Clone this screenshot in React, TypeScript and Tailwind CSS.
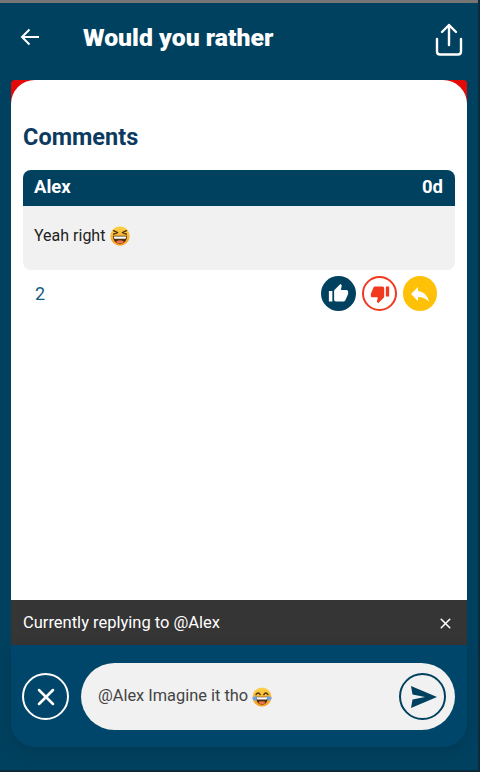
import React from "react";
import { X } from "lucide-react";
import { MdThumbUp, MdThumbDown, MdReply } from "react-icons/md";

function Grin({ size = 20 }: { size?: number }) {
  return (
    <svg width={size} height={size} viewBox="0 0 20 20" className="inline-block shrink-0">
      <defs>
        <linearGradient id="g1" x1="0" y1="0" x2="0" y2="1">
          <stop offset="0" stopColor="#fbd24a" />
          <stop offset="1" stopColor="#f79a1c" />
        </linearGradient>
      </defs>
      <circle cx="10" cy="10" r="9.7" fill="url(#g1)" />
      <path d="M3.6 4.6 L7.6 6.6 L3.6 8.2 M16.4 4.6 L12.4 6.6 L16.4 8.2" fill="none" stroke="#4a2f12" strokeWidth="1.3" strokeLinecap="round" strokeLinejoin="round" />
      <path d="M3 9.8 H17 C17 15 13.8 17.8 10 17.8 C6.2 17.8 3 15 3 9.8 Z" fill="#4a2f12" />
      <path d="M3.8 10.4 H16.2 C16.1 11.4 15.9 12.2 15.6 12.8 H4.4 C4.1 12.2 3.9 11.4 3.8 10.4 Z" fill="#fff" />
      <ellipse cx="10" cy="15.8" rx="3.6" ry="1.5" fill="#f2714e" />
    </svg>
  );
}

function Joy({ size = 20 }: { size?: number }) {
  return (
    <svg width={size} height={size} viewBox="0 0 20 20" className="inline-block shrink-0">
      <defs>
        <linearGradient id="g2" x1="0" y1="0" x2="0" y2="1">
          <stop offset="0" stopColor="#fbd24a" />
          <stop offset="1" stopColor="#f79a1c" />
        </linearGradient>
      </defs>
      <circle cx="10" cy="10" r="9.5" fill="url(#g2)" />
      <path d="M4 7.6 Q6.2 4.4 8.2 7.6 M11.8 7.6 Q13.8 4.4 16 7.6" fill="none" stroke="#4a2f12" strokeWidth="1.3" strokeLinecap="round" />
      <path d="M4 9.8 H16 C16 15 13.3 17.6 10 17.6 C6.7 17.6 4 15 4 9.8 Z" fill="#4a2f12" />
      <path d="M4.8 10.3 H15.2 C15.1 11.2 14.9 11.9 14.6 12.5 H5.4 C5.1 11.9 4.9 11.2 4.8 10.3 Z" fill="#fff" />
      <ellipse cx="10" cy="15.7" rx="3.2" ry="1.4" fill="#f2714e" />
      <path d="M0 11 Q2 8.6 5 9.4 L4.6 13.6 Q1.4 14 0 11 Z M20 11 Q18 8.6 15 9.4 L15.4 13.6 Q18.6 14 20 11 Z" fill="#6f9fe8" />
    </svg>
  );
}

export default function App() {
  return (
    <div className="w-[480px] h-[772px] overflow-hidden flex flex-col bg-[#00415f] font-['Roboto',sans-serif] border-r-2 border-b-2 border-r-[#0b2a3c] border-b-[#0b2a3c]">
      <div className="h-[3px] bg-[#757575] shrink-0" />
      <header className="h-[77px] shrink-0 flex items-center pl-[20px] pr-[15px] pb-[6px]">
        <svg width="20" height="18" viewBox="0 0 20 18" fill="none" stroke="#fff" strokeWidth="2" className="mb-[3px]">
          <path d="M19 9 H2 M9.5 1.5 L2 9 L9.5 16.5" />
        </svg>
        <h1 className="ml-[43px] text-[24.8px] leading-none font-black text-white">Would you rather</h1>
        <svg width="28" height="33" viewBox="0 0 28 33" fill="none" stroke="#fff" strokeWidth="2.4" strokeLinecap="round" strokeLinejoin="round" className="ml-auto mt-[1px]">
          <path d="M14 22 V2 M7 9 L14 2 L21 9" />
          <path d="M2 16 V28.5 Q2 31.5 5 31.5 H23 Q26 31.5 26 28.5 V16" />
        </svg>
      </header>
      <div className="relative w-[456px] ml-[11px] h-[667px] shrink-0 flex flex-col">
        <div className="absolute top-0 left-0 right-0 h-[24px] bg-[#e30a0a] rounded-t-[4px]" />
        <main className="relative flex-1 bg-white rounded-t-[24px] px-[12px] pt-[43px] flex flex-col">
          <h2 className="text-[23.5px] leading-[28px] font-bold text-[#0c3a60]">Comments</h2>
          <div className="mt-[19px] rounded-[8px] overflow-hidden">
            <div className="h-[36px] bg-[#00415f] flex items-center justify-between pl-[11px] pr-[12px] text-white font-bold text-[18.5px]">
              <span>Alex</span>
              <span>0d</span>
            </div>
            <div className="h-[64px] bg-[#f1f1f1] pl-[11px] pt-[20px] flex items-start gap-[5px] text-[16px] leading-[20px] text-[#222]">
              <span>Yeah right</span>
              <Grin />
            </div>
          </div>
          <div className="mt-[6px] flex items-center h-[35px] pl-[12px] pr-[18px]">
            <span className="text-[#0f5c80] text-[18px]">2</span>
            <div className="ml-auto flex gap-[6px]">
              <div className="w-[35px] h-[35px] rounded-full bg-[#00415f] flex items-center justify-center">
                <MdThumbUp size={21} color="#fff" />
              </div>
              <div className="w-[35px] h-[35px] rounded-full border-2 border-[#f0391e] bg-white flex items-center justify-center">
                <MdThumbDown size={20} color="#f0391e" />
              </div>
              <div className="w-[34px] h-[35px] rounded-full bg-[#ffc107] flex items-center justify-center">
                <MdReply size={24} color="#fff" />
              </div>
            </div>
          </div>
        </main>
        <div className="h-[45px] shrink-0 bg-[#353535] flex items-center justify-between pl-[12px] pr-[13px] pt-[1px] text-white text-[16.5px]">
          <span>Currently replying to @Alex</span>
          <X size={17} strokeWidth={2.2} color="#fff" />
        </div>
        <div className="h-[102px] shrink-0 bg-[#00456a] rounded-b-[24px] shadow-[0_4px_14px_rgba(0,0,0,0.12)] flex items-start pt-[18px] pl-[11px] pr-[12px]">
          <div className="mt-[10px] w-[47px] h-[47px] rounded-full border-[2.5px] border-white flex items-center justify-center shrink-0">
            <X size={28} strokeWidth={2.2} color="#fff" />
          </div>
          <div className="ml-[12px] flex-1 h-[67px] rounded-full bg-[#f1f1f1] flex items-center pl-[17px] pr-[9px]">
            <span className="text-[16.4px] text-[#444]">@Alex Imagine it tho</span>
            <span className="ml-[4px]"><Joy /></span>
            <div className="ml-auto w-[47px] h-[47px] rounded-full border-[2.5px] border-[#00415f] flex items-center justify-center">
              <svg width="28" height="22" viewBox="0 0 28 22" className="ml-[3px]">
                <path d="M1 0 L27 11 L1 22 L2.5 13.5 L15 11 L2.5 8.5 Z" fill="#00415f" />
              </svg>
            </div>
          </div>
        </div>
      </div>
    </div>
  );
}
